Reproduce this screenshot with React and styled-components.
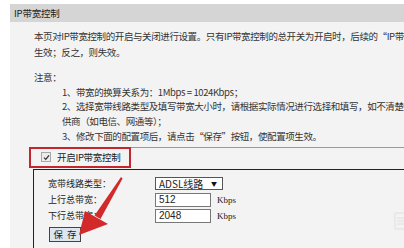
import styled, { createGlobalStyle } from "styled-components";

const GlobalStyle = createGlobalStyle`
  html, body {
    margin: 0;
    padding: 0;
    background: #fff;
  }
  body {
    font-family: "Noto Sans CJK SC", "Liberation Sans", sans-serif;
    color: #222;
  }
`;

const App = () => {
  return (
    <Page>
      <GlobalStyle />
      <Panel>
        <Header>IP带宽控制</Header>
        <Intro>
          本页对IP带宽控制的开启与关闭进行设置。只有IP带宽控制的总开关为开启时，后续的“IP带
          <br />
          生效；反之，则失效。
        </Intro>
        <Notes>
          <NoteTitle>注意：</NoteTitle>
          <NoteItem>1、带宽的换算关系为：1Mbps = 1024Kbps；</NoteItem>
          <NoteItem>2、选择宽带线路类型及填写带宽大小时，请根据实际情况进行选择和填写，如不清楚</NoteItem>
          <NoteItem>供商（如电信、网通等）；</NoteItem>
          <NoteItem>3、修改下面的配置项后，请点击“保存”按钮，使配置项生效。</NoteItem>
        </Notes>
        <Separator />
        <Highlight>
          <CheckBox>
            <svg width="7" height="7" viewBox="0 0 7 7">
              <path d="M1 3.6 L2.8 5.4 L6 1.4" fill="none" stroke="#333" strokeWidth="1.3" />
            </svg>
          </CheckBox>
          <CheckLabel>开启IP带宽控制</CheckLabel>
        </Highlight>
        <Fieldset>
          <FormRow>
            <Label>宽带线路类型：</Label>
            <Select>
              <span>ADSL线路</span>
              <Caret>▼</Caret>
            </Select>
          </FormRow>
          <FormRow>
            <Label>上行总带宽：</Label>
            <Input defaultValue="512" />
            <Unit>Kbps</Unit>
          </FormRow>
          <FormRow>
            <Label>下行总带宽：</Label>
            <Input defaultValue="2048" />
            <Unit>Kbps</Unit>
          </FormRow>
          <SaveButton>保 存</SaveButton>
        </Fieldset>
      </Panel>

      {/* red annotation arrow drawn over the form */}
      <Overlay width="404" height="248" viewBox="0 0 404 248">
        <polygon points="121,177 122.6,178.4 100.5,219 94.5,215.5" fill="#d22a2a" />
        <polygon points="79,235 85,211 108,224" fill="#d22a2a" />
      </Overlay>

      {/* faint watermark in the corner */}
      <Watermark width="12" height="18" viewBox="0 0 12 18">
        <rect x="1" y="1" width="11" height="16" fill="none" stroke="#e6e6e6" strokeWidth="1.5" />
        <path d="M3 6 H12 M3 9 H12 M3 12 H12" stroke="#e6e6e6" strokeWidth="1.5" />
      </Watermark>
    </Page>
  );
};

export default App;

const Page = styled.div`
  position: relative;
  width: 404px;
  height: 248px;
  overflow: hidden;
  box-sizing: border-box;
  padding: 4px 0 0 10px;
  background: #fff;
`;

const Panel = styled.div`
  height: 100%;
  display: flex;
  flex-direction: column;
  background: #f3f3f3;
`;

const Header = styled.div`
  height: 18px;
  line-height: 18px;
  padding-left: 4px;
  background: #d5d5d5;
  font-size: 9.5px;
  letter-spacing: -0.2px;
  color: #222;
`;

const Intro = styled.p`
  margin: 6px 0 0 24px;
  font-size: 9.5px;
  letter-spacing: -0.4px;
  line-height: 16px;
  white-space: nowrap;
  color: #333;
`;

const Notes = styled.div`
  margin-top: 10px;
  font-size: 9.5px;
  letter-spacing: -0.4px;
  line-height: 14.7px;
  white-space: nowrap;
  color: #333;
`;

const NoteTitle = styled.div`
  padding-left: 24px;
`;

const NoteItem = styled.div`
  padding-left: 52px;
`;

const Separator = styled.div`
  margin: 3px 0 0 20px;
  height: 1px;
  background: #9a9a9a;
`;

const Highlight = styled.div`
  display: flex;
  align-items: center;
  gap: 6px;
  box-sizing: border-box;
  width: 102px;
  height: 21px;
  margin: -1px 0 0 19px;
  padding-left: 10px;
  border: 2px solid #c4262e;
`;

const CheckBox = styled.span`
  display: flex;
  align-items: center;
  justify-content: center;
  width: 8px;
  height: 8px;
  border: 1px solid #a8a8a8;
  background: #ececec;
`;

const CheckLabel = styled.span`
  font-size: 9.5px;
  letter-spacing: -0.3px;
  color: #222;
`;

const Fieldset = styled.div`
  flex: 1;
  margin: 1px 0 0 23px;
  padding: 6px 0 0 14px;
  border-top: 1px solid #222;
  border-left: 1px solid #222;
`;

const FormRow = styled.div`
  display: flex;
  align-items: center;
  height: 16px;
`;

const Label = styled.span`
  width: 107px;
  font-size: 9px;
  color: #222;
`;

const Select = styled.div`
  display: flex;
  align-items: center;
  justify-content: space-between;
  box-sizing: border-box;
  width: 68px;
  height: 13px;
  padding: 0 5px 0 3px;
  border: 1px solid #555;
  background: #fff;
  font-size: 10px;
  color: #222;
`;

const Caret = styled.span`
  font-size: 6px;
  color: #111;
`;

const Input = styled.input`
  box-sizing: border-box;
  width: 56px;
  height: 14px;
  padding: 0 0 0 3px;
  border: 1px solid #777;
  background: #fff;
  font-family: "Liberation Sans", sans-serif;
  font-size: 10px;
  color: #222;
  outline: none;
`;

const Unit = styled.span`
  margin-left: 6px;
  font-family: "Liberation Serif", serif;
  font-size: 9px;
  color: #222;
`;

const SaveButton = styled.button`
  display: block;
  box-sizing: border-box;
  width: 32px;
  height: 15px;
  margin: 3px 0 0 1px;
  padding: 0 0 0 1px;
  border: 1px solid #444;
  background: #dde6ee;
  font-family: "Noto Sans CJK SC", sans-serif;
  font-size: 9.5px;
  line-height: 13px;
  letter-spacing: 1px;
  color: #222;
`;

const Overlay = styled.svg`
  position: absolute;
  left: 0;
  top: 0;
  pointer-events: none;
`;

const Watermark = styled.svg`
  position: absolute;
  left: 394px;
  top: 212px;
  pointer-events: none;
`;
